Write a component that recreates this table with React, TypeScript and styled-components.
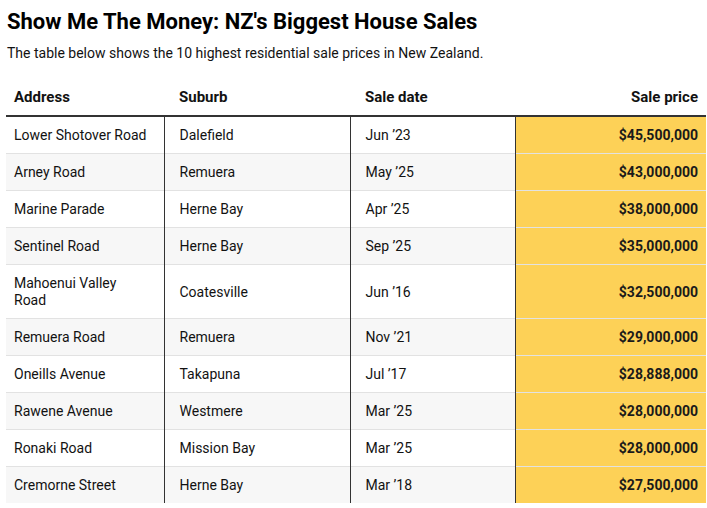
import React from "react";
import styled, { createGlobalStyle } from "styled-components";

const GlobalStyle = createGlobalStyle`
  html, body {
    margin: 0;
    padding: 0;
    background: #fff;
  }
  body {
    font-family: Roboto, "Liberation Sans", Arial, sans-serif;
    color: #121212;
  }
`;

const Page = styled.div`
  padding: 7px 1px 0 6px;
`;

const Title = styled.h1`
  margin: 0 0 0 1px;
  font-size: 22px;
  line-height: 30px;
  font-weight: 700;
  color: #000;
`;

const Subtitle = styled.p`
  margin: 7px 0 0 1px;
  font-size: 14px;
  line-height: 18px;
  color: #121212;
`;

const Table = styled.table`
  margin-top: 18px;
  width: 700px;
  border-collapse: collapse;
  table-layout: fixed;
  font-size: 14px;
`;

const HeadCell = styled.th<{ $right?: boolean; $first?: boolean }>`
  text-align: ${(p) => (p.$right ? "right" : "left")};
  font-weight: 700;
  font-size: 15px;
  line-height: 18px;
  padding: 8px 8px 9px ${(p) => (p.$first ? "8px" : "15px")};
  border-bottom: 2px solid #333;
  color: #121212;
`;

const Row = styled.tr<{ $alt: boolean }>`
  background: ${(p) => (p.$alt ? "#f7f7f7" : "#fff")};
  border-bottom: 1px solid #e2e2e2;
  &:last-child {
    border-bottom: none;
  }
`;

const Cell = styled.td<{ $divider?: boolean; $first?: boolean }>`
  padding: 10px ${(p) => (p.$first ? "15px" : "8px")} 9px
    ${(p) => (p.$first ? "8px" : "15px")};
  line-height: 17px;
  vertical-align: middle;
  border-left: ${(p) => (p.$divider ? "1px solid #333" : "none")};
`;

const PriceCell = styled.td`
  padding: 10px 8px 9px 15px;
  line-height: 17px;
  text-align: right;
  font-weight: 700;
  background: #fdd157;
  border-left: 1px solid #333;
  color: #1a1a1a;
`;

const sales = [
  ["Lower Shotover Road", "Dalefield", "Jun \u201923", "$45,500,000"],
  ["Arney Road", "Remuera", "May \u201925", "$43,000,000"],
  ["Marine Parade", "Herne Bay", "Apr \u201925", "$38,000,000"],
  ["Sentinel Road", "Herne Bay", "Sep \u201925", "$35,000,000"],
  ["Mahoenui Valley Road", "Coatesville", "Jun \u201916", "$32,500,000"],
  ["Remuera Road", "Remuera", "Nov \u201921", "$29,000,000"],
  ["Oneills Avenue", "Takapuna", "Jul \u201917", "$28,888,000"],
  ["Rawene Avenue", "Westmere", "Mar \u201925", "$28,000,000"],
  ["Ronaki Road", "Mission Bay", "Mar \u201925", "$28,000,000"],
  ["Cremorne Street", "Herne Bay", "Mar \u201918", "$27,500,000"],
];

const App: React.FC = () => {
  return (
    <Page>
      <GlobalStyle />
      <Title>Show Me The Money: NZ's Biggest House Sales</Title>
      <Subtitle>
        The table below shows the 10 highest residential sale prices in New
        Zealand.
      </Subtitle>
      <Table>
        <colgroup>
          <col style={{ width: 158 }} />
          <col style={{ width: 186 }} />
          <col style={{ width: 165 }} />
          <col style={{ width: 191 }} />
        </colgroup>
        <thead>
          <tr>
            <HeadCell $first>Address</HeadCell>
            <HeadCell>Suburb</HeadCell>
            <HeadCell>Sale date</HeadCell>
            <HeadCell $right>Sale price</HeadCell>
          </tr>
        </thead>
        <tbody>
          {sales.map(([address, suburb, date, price], i) => (
            <Row key={address} $alt={i % 2 === 1}>
              <Cell $first>{address}</Cell>
              <Cell $divider>{suburb}</Cell>
              <Cell $divider>{date}</Cell>
              <PriceCell>{price}</PriceCell>
            </Row>
          ))}
        </tbody>
      </Table>
    </Page>
  );
};

export default App;
